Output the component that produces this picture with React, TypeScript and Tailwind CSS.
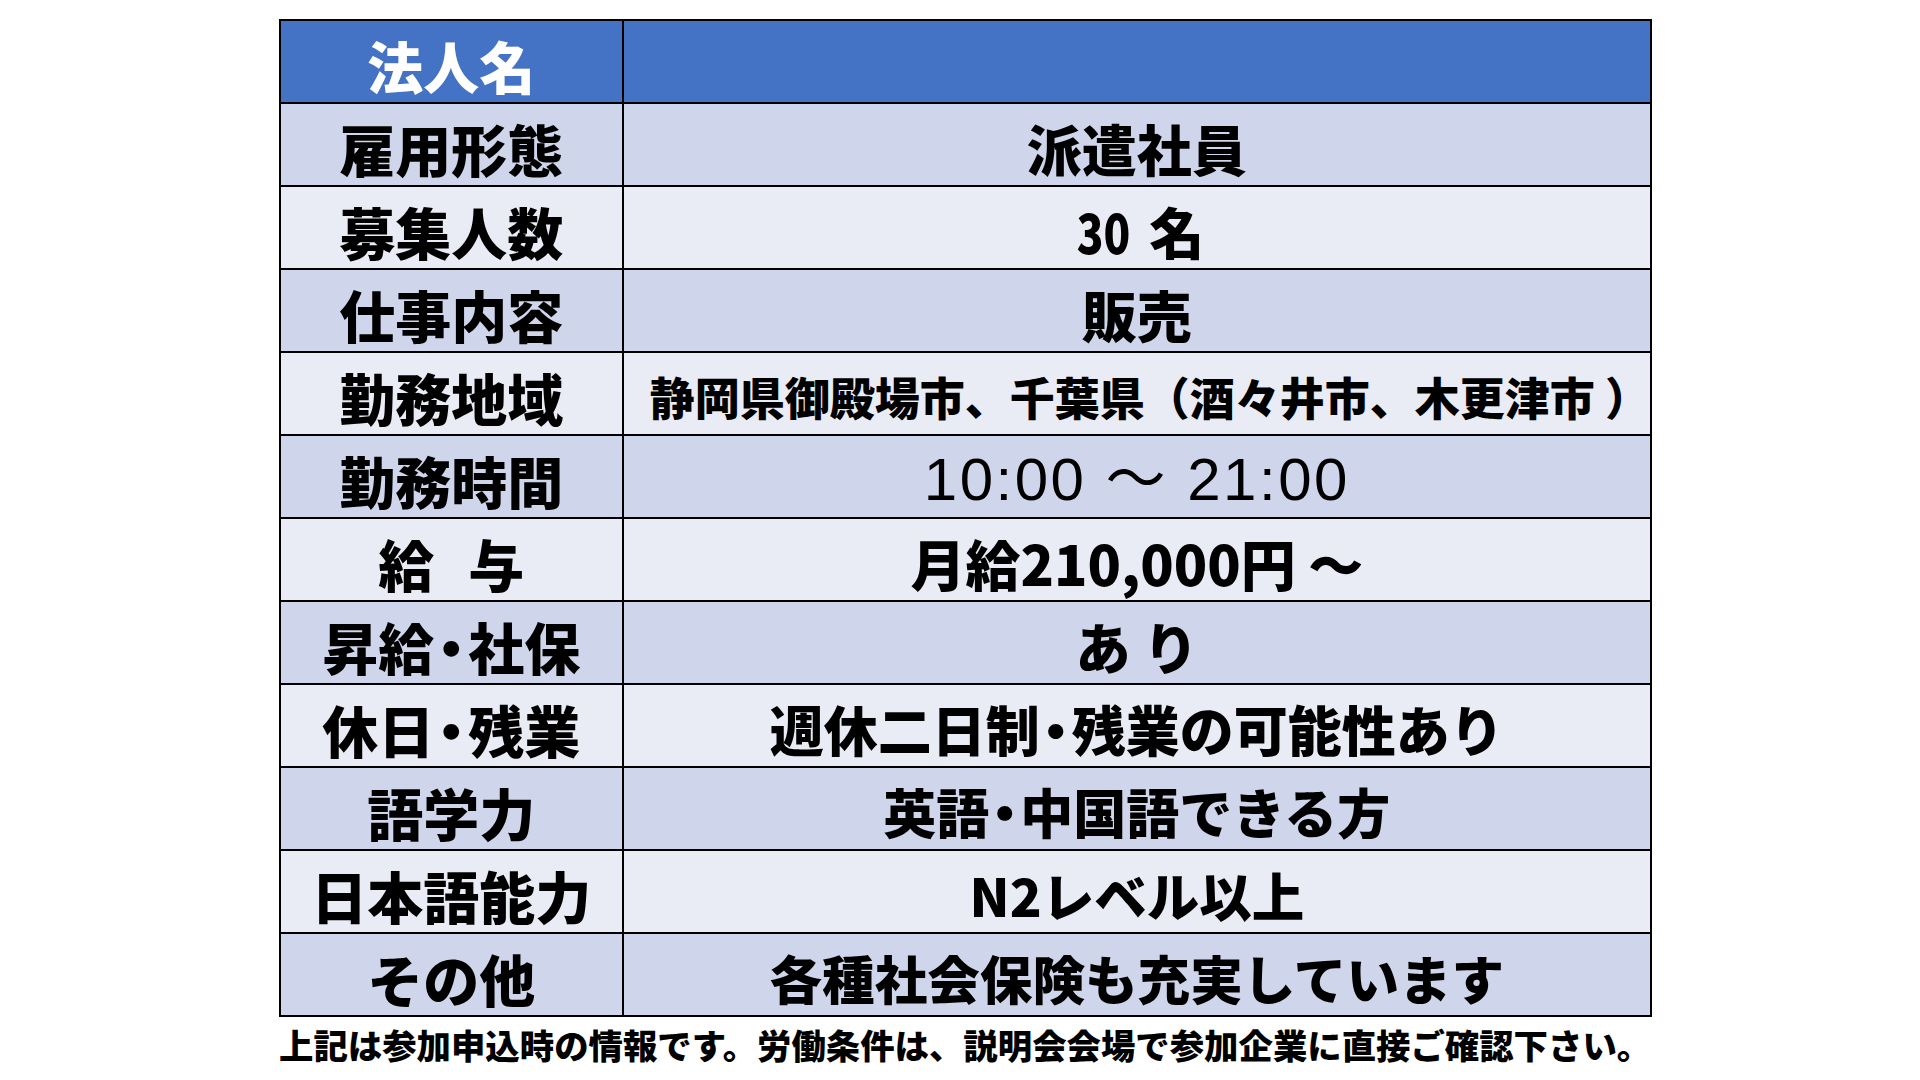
import React from "react";

const jp = "font-['Noto_Sans_CJK_JP',sans-serif]";

type Row = {
  label: React.ReactNode;
  value: React.ReactNode;
};

const Dot = () => <span className="-mx-[11px]">・</span>;

const rows: Row[] = [
  { label: "雇用形態", value: "派遣社員" },
  {
    label: "募集人数",
    value: (
      <span>
        <span className="inline-block scale-x-[0.8]">30</span> 名
      </span>
    ),
  },
  { label: "仕事内容", value: "販売" },
  {
    label: "勤務地域",
    value: (
      <span className="pl-[26px] text-[45px]">静岡県御殿場市、千葉県（酒々井市、木更津市 ）</span>
    ),
  },
  {
    label: "勤務時間",
    value: (
      <span className="font-['Liberation_Sans','Noto_Sans_CJK_JP',sans-serif] text-[60px] font-normal tracking-[2.5px]">
        10:00 〜 21:00
      </span>
    ),
  },
  {
    label: (
      <span className="flex gap-[34px]">
        <span>給</span>
        <span>与</span>
      </span>
    ),
    value: "月給210,000円 〜",
  },
  {
    label: (
      <span>
        昇給<Dot />社保
      </span>
    ),
    value: "あ り",
  },
  {
    label: (
      <span>
        休日<Dot />残業
      </span>
    ),
    value: (
      <span className="text-[54px]">
        週休二日制<Dot />残業の可能性あり
      </span>
    ),
  },
  {
    label: "語学力",
    value: (
      <span className="text-[53px]">
        英語<Dot />中国語できる方
      </span>
    ),
  },
  { label: "日本語能力", value: <span className="text-[52.5px]">N2レベル以上</span> },
  { label: "その他", value: <span className="text-[52.6px]">各種社会保険も充実しています</span> },
];

export default function App() {
  return (
    <div className={`min-h-[1080px] w-[1920px] bg-white ${jp}`}>
      <div className="ml-[279px] pt-[19px]">
        <table className="w-[1373px] border-collapse border-2 border-black">
          <tbody>
            <tr className="h-[83px] bg-[#4472C4]">
              <td className="w-[344px] border-2 border-black pt-[6px] text-center text-[56px] font-black leading-none text-white">
                法人名
              </td>
              <td className="border-2 border-black" />
            </tr>
            {rows.map((row, i) => (
              <tr
                key={i}
                className={`h-[83px] ${i % 2 === 0 ? "bg-[#CFD5EA]" : "bg-[#E9EBF5]"}`}
              >
                <td className="border-2 border-black pt-[6px] text-[56px] font-black leading-none text-black">
                  <div className="flex justify-center">{row.label}</div>
                </td>
                <td className="border-2 border-black pt-[6px] text-[55px] font-black leading-none text-black">
                  <div className="flex justify-center whitespace-pre">{row.value}</div>
                </td>
              </tr>
            ))}
          </tbody>
        </table>
        <p className="mt-[10px] whitespace-nowrap text-[34.4px] font-black leading-none text-black">
          上記は参加申込時の情報です。労働条件は、説明会会場で参加企業に直接ご確認下さい。
        </p>
      </div>
    </div>
  );
}
